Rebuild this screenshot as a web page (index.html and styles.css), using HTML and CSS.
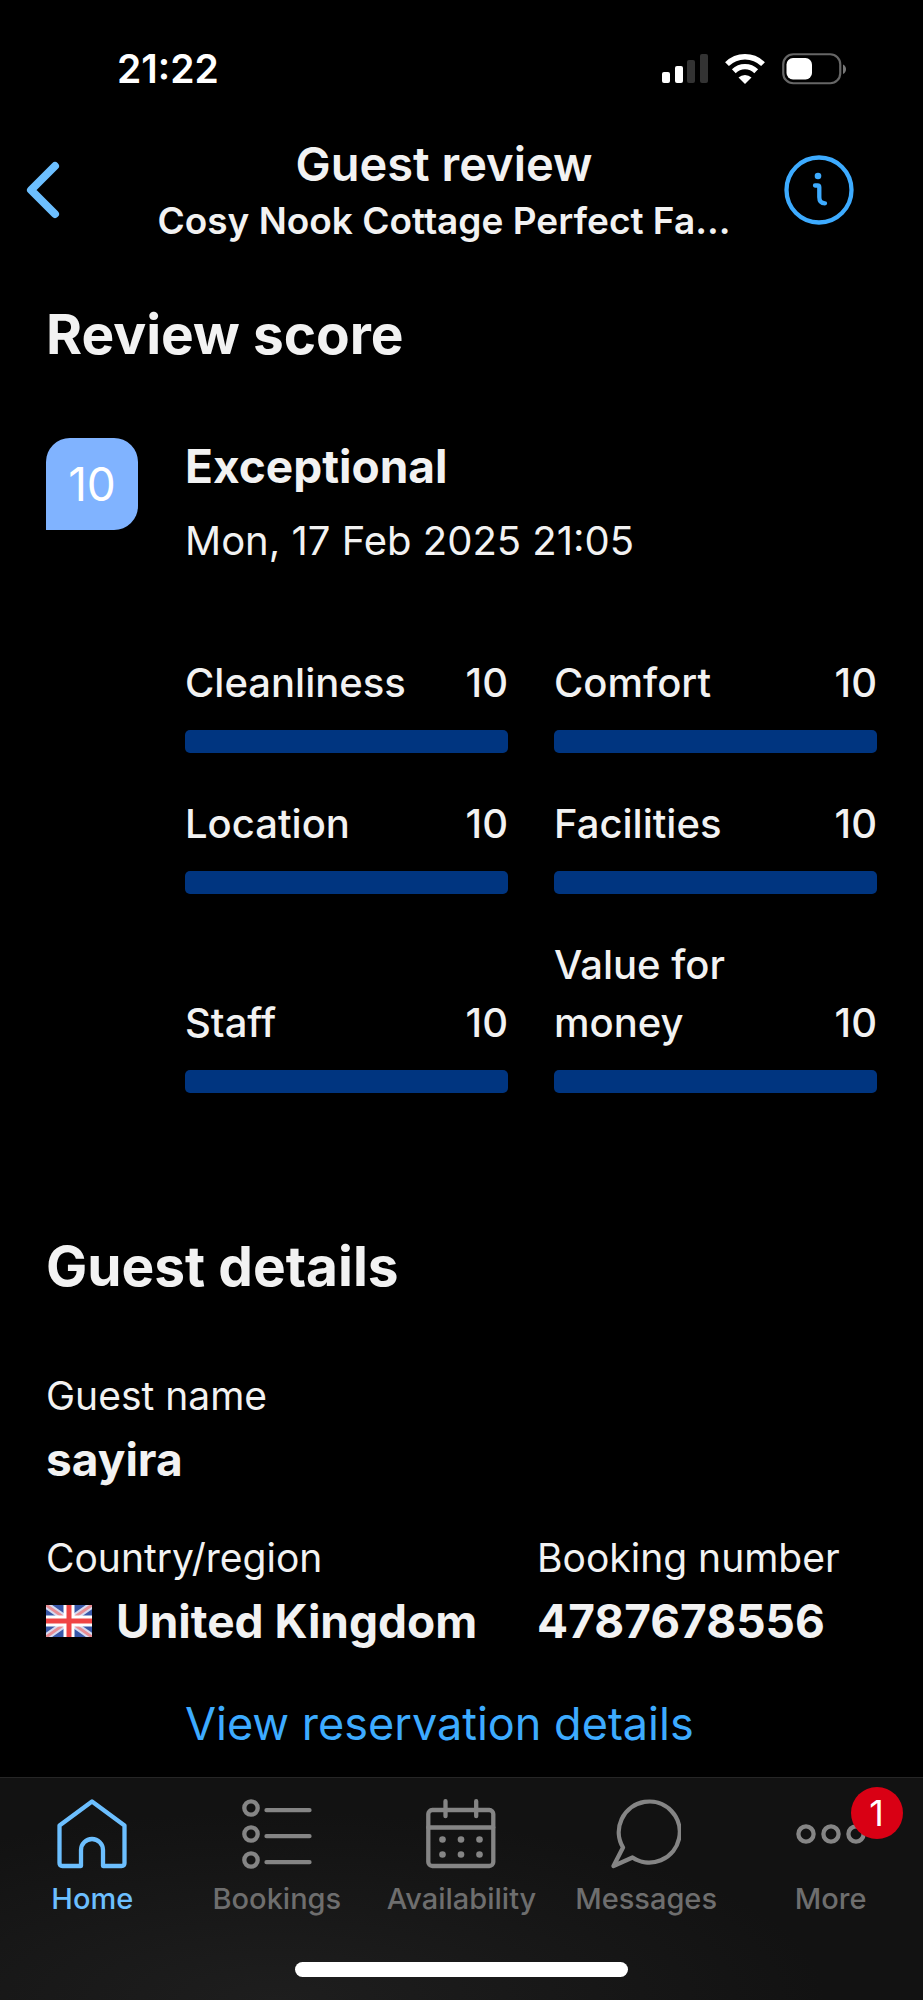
FILE: index.html
```html
<!DOCTYPE html>
<html lang="en">
<head>
    <meta charset="UTF-8">
    <meta name="viewport" content="width=device-width, initial-scale=1.0">
    <title>Guest review</title>
    <link rel="stylesheet" href="styles.css">
</head>
<body>
    <div class="status-bar">
        <span class="time">21:22</span>
        <div class="status-icons">
            <svg width="46" height="30" viewBox="0 0 46 30" fill="#fff">
                <rect x="0" y="18" width="8" height="11" rx="2"/>
                <rect x="13" y="12" width="8" height="17" rx="2"/>
                <rect x="25" y="6" width="8" height="23" rx="2" fill="#333"/>
                <rect x="38" y="0" width="8" height="29" rx="2" fill="#333"/>
            </svg>
            <svg width="40" height="30" viewBox="0 0 40 30" fill="none" stroke="#fff" stroke-width="5.4">
                <path d="M2 10.2a25.5 25.5 0 0 1 36 0"/>
                <path d="M8.8 17.2a16 16 0 0 1 22.4 0"/>
                <path d="M13.5 23.5a9.4 9.4 0 0 1 13 0L20 30z" fill="#fff" stroke="none"/>
            </svg>
            <svg width="65" height="32" viewBox="0 0 65 32">
                <rect x="1.25" y="1.25" width="57" height="29" rx="10" fill="none" stroke="#666" stroke-width="2.2"/>
                <rect x="4.5" y="5" width="25.5" height="21.5" rx="6.5" fill="#fff"/>
                <path d="M61 11.5c4 1.5 4 8 0 9.5z" fill="#777"/>
            </svg>
        </div>
    </div>

    <header class="header">
        <button class="back" aria-label="Back">
            <svg width="34" height="58" viewBox="0 0 34 58" fill="none" stroke="#6cbfff" stroke-width="8" stroke-linecap="round" stroke-linejoin="round">
                <path d="M29 5L5 29l24 24"/>
            </svg>
        </button>
        <div class="titles">
            <h1>Guest review</h1>
            <p>Cosy Nook Cottage Perfect Fa...</p>
        </div>
        <button class="info" aria-label="Information">
            <svg width="70" height="70" viewBox="0 0 70 70" fill="none" stroke="#3dabff" stroke-width="4.3" stroke-linecap="round" stroke-linejoin="round">
                <circle cx="35" cy="35" r="32.5"/>
                <path d="M31 30.5h2.5q1.8 0 1.8 1.8v10q0 6 5.7 6"/>
                <circle cx="34" cy="21" r="3.3" fill="#3dabff" stroke="none"/>
            </svg>
        </button>
    </header>

    <main>
        <section>
            <h2>Review score</h2>
            <div class="score">
                <div class="score-badge">10</div>
                <div>
                    <h3>Exceptional</h3>
                    <p class="date">Mon, 17 Feb 2025 21:05</p>
                </div>
            </div>
            <div class="metrics">
                <div class="metric">
                    <div class="metric-label"><span>Cleanliness</span><span>10</span></div>
                    <div class="bar"></div>
                </div>
                <div class="metric">
                    <div class="metric-label"><span>Comfort</span><span>10</span></div>
                    <div class="bar"></div>
                </div>
                <div class="metric">
                    <div class="metric-label"><span>Location</span><span>10</span></div>
                    <div class="bar"></div>
                </div>
                <div class="metric">
                    <div class="metric-label"><span>Facilities</span><span>10</span></div>
                    <div class="bar"></div>
                </div>
                <div class="metric">
                    <div class="metric-label"><span>Staff</span><span>10</span></div>
                    <div class="bar"></div>
                </div>
                <div class="metric">
                    <div class="metric-label"><span>Value for money</span><span>10</span></div>
                    <div class="bar"></div>
                </div>
            </div>
        </section>

        <section class="guest">
            <h2>Guest details</h2>
            <dl class="details">
                <div class="wide">
                    <dt>Guest name</dt>
                    <dd>sayira</dd>
                </div>
                <div>
                    <dt>Country/region</dt>
                    <dd>
                        <svg width="46" height="32" viewBox="0 0 46 32">
                            <rect width="46" height="32" fill="#3857a8"/>
                            <path d="M0 0l46 32M46 0L0 32" stroke="#d6daf0" stroke-width="7"/>
                            <path d="M0 0l46 32M46 0L0 32" stroke="#e88d94" stroke-width="3"/>
                            <path d="M23 0v32M0 16h46" stroke="#fff" stroke-width="11"/>
                            <path d="M23 0v32M0 16h46" stroke="#f04444" stroke-width="5"/>
                        </svg>
                        United Kingdom
                    </dd>
                </div>
                <div>
                    <dt>Booking number</dt>
                    <dd>4787678556</dd>
                </div>
            </dl>
            <a href="#" class="view-link">View reservation details</a>
        </section>
    </main>

    <nav class="tab-bar">
        <div class="tabs">
            <a href="#" class="tab active">
                <svg width="70" height="70" viewBox="0 0 70 70">
                    <path d="M35 2.5L67.5 26.5V64q0 3-3 3H46V51a11 11 0 0 0-22 0v16H5.500q-3 0-3-3V26.5z"/>
                </svg>
                Home
            </a>
            <a href="#" class="tab">
                <svg width="70" height="70" viewBox="0 0 70 70">
                    <circle cx="9" cy="9" r="6.7"/>
                    <circle cx="9" cy="35" r="6.7"/>
                    <circle cx="9" cy="61" r="6.7"/>
                    <path d="M24.5 11.2h43M24.5 37.2h43M24.5 63.2h43"/>
                </svg>
                Bookings
            </a>
            <a href="#" class="tab">
                <svg width="70" height="70" viewBox="0 0 70 70">
                    <rect x="2.3" y="11" width="65" height="56" rx="4"/>
                    <path d="M2.3 28.5h65M19.5 2.2v15M50.2 2.2v15"/>
                    <g class="dots">
                        <circle cx="16.5" cy="40.5" r="3.3"/>
                        <circle cx="35" cy="40.5" r="3.3"/>
                        <circle cx="53.5" cy="40.5" r="3.3"/>
                        <circle cx="16.5" cy="55.5" r="3.3"/>
                        <circle cx="35" cy="55.5" r="3.3"/>
                        <circle cx="53.5" cy="55.5" r="3.3"/>
                    </g>
                </svg>
                Availability
            </a>
            <a href="#" class="tab">
                <svg width="70" height="70" viewBox="0 0 70 70">
                    <path d="M12 48.5a30.5 30.5 0 1 1 9.5 10L2.5 67z"/>
                </svg>
                Messages
            </a>
            <a href="#" class="tab">
                <svg width="70" height="70" viewBox="0 0 70 70">
                    <circle cx="10" cy="35" r="7.6"/>
                    <circle cx="35" cy="35" r="7.6"/>
                    <circle cx="60" cy="35" r="7.6"/>
                </svg>
                More
                <span class="badge">1</span>
            </a>
        </div>
        <div class="home-indicator"></div>
    </nav>
</body>
</html>
```

FILE: styles.css
```css
* {
    box-sizing: border-box;
}
body {
    margin: 0;
    min-height: 100vh;
    display: flex;
    flex-direction: column;
    background-color: #000;
    color: #f2f2f2;
    font-family: Inter, "Liberation Sans", sans-serif;
    font-size: 40px;
    line-height: 58px;
}
h1, h2, h3, p, dl, dd {
    margin: 0;
}
svg {
    display: block;
    flex-shrink: 0;
}
button {
    padding: 0;
    border: none;
    background: none;
    cursor: pointer;
}
a {
    text-decoration: none;
}

.status-bar {
    display: flex;
    justify-content: space-between;
    align-items: center;
    padding: 46px 76px 0 117px;
    color: #fff;
}
.time {
    font-size: 39px;
    line-height: 46px;
    font-weight: 600;
}
.status-icons {
    display: flex;
    align-items: center;
    gap: 17px;
}

.header {
    display: flex;
    align-items: center;
    padding: 43px 69px 0 26px;
}
.back {
    width: 78px;
}
.titles {
    flex: 1;
    text-align: center;
    white-space: nowrap;
}
.titles h1 {
    font-size: 47px;
    line-height: 58px;
    font-weight: 600;
}
.titles p {
    margin-top: 4px;
    font-size: 37px;
    line-height: 48px;
    font-weight: 600;
}

main {
    padding: 55px 46px 20px;
}
h2 {
    font-size: 55px;
    line-height: 68px;
    font-weight: 700;
}
.score {
    display: flex;
    gap: 47px;
    margin-top: 70px;
}
.score-badge {
    width: 92px;
    height: 92px;
    border-radius: 24px 24px 24px 0;
    background-color: #80b3ff;
    color: #fff;
    font-size: 46px;
    line-height: 92px;
    text-align: center;
}
h3 {
    font-size: 46px;
    line-height: 56px;
    font-weight: 700;
}
.date {
    margin-top: 18px;
}

.metrics {
    display: grid;
    grid-template-columns: 1fr 1fr;
    align-items: end;
    gap: 42px 46px;
    margin-top: 84px;
    padding-left: 139px;
}
.metric-label {
    display: flex;
    justify-content: space-between;
    align-items: flex-end;
    margin-bottom: 18px;
    font-weight: 500;
}
.bar {
    height: 23px;
    border-radius: 5px;
    background-color: #003580;
}

.guest {
    margin-top: 139px;
}
.details {
    display: grid;
    grid-template-columns: 13fr 9fr;
    row-gap: 38px;
    margin-top: 67px;
}
.wide {
    grid-column: 1 / -1;
}
dt {
    font-size: 39px;
}
dd {
    display: flex;
    align-items: center;
    gap: 24px;
    margin-top: 2px;
    font-size: 46px;
    line-height: 64px;
    font-weight: 700;
    white-space: nowrap;
}
.view-link {
    display: block;
    margin-top: 39px;
    padding-left: 139px;
    color: #3dabff;
    font-size: 45px;
    line-height: 64px;
}

.tab-bar {
    margin-top: auto;
    padding: 21px 0 23px;
    border-top: 1px solid #262626;
    background: radial-gradient(ellipse at 30% 100%, #1e1e1e, #121212 60%);
}
.tabs {
    display: grid;
    grid-template-columns: repeat(5, 1fr);
}
.tab {
    position: relative;
    display: flex;
    flex-direction: column;
    align-items: center;
    gap: 13px;
    color: #6e6e6e;
    font-size: 29px;
    line-height: 34px;
    font-weight: 500;
}
.tab svg {
    fill: none;
    stroke: #858585;
    stroke-width: 4.3;
    stroke-linecap: round;
    stroke-linejoin: round;
}
.tab .dots {
    fill: #858585;
    stroke: none;
}
.tab.active {
    color: #6cbfff;
}
.tab.active svg {
    stroke: #6cbfff;
}
.badge {
    position: absolute;
    top: -12px;
    left: calc(50% + 20px);
    width: 52px;
    height: 52px;
    border-radius: 50%;
    background-color: #d90014;
    color: #fff;
    font-size: 36px;
    line-height: 52px;
    font-weight: 400;
    text-align: center;
}
.home-indicator {
    width: 36%;
    height: 15px;
    margin: 46px auto 0;
    border-radius: 8px;
    background-color: #fff;
}
```
